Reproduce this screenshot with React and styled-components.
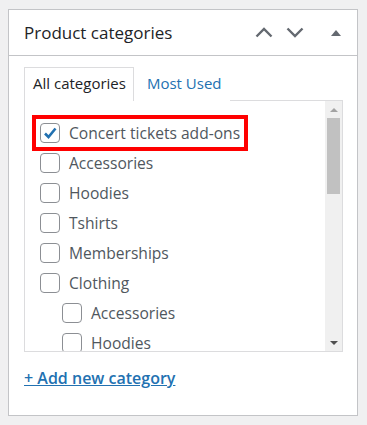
import React from 'react'
import styled, { createGlobalStyle } from 'styled-components'

const GlobalStyle = createGlobalStyle`
  body {
    margin: 0;
    background: #f0f0f1;
    font-family: 'Open Sans', 'Noto Sans', sans-serif;
  }
`

const categories = [
  { name: 'Concert tickets add-ons', checked: true, highlight: true },
  { name: 'Accessories' },
  { name: 'Hoodies' },
  { name: 'Tshirts' },
  { name: 'Memberships' },
  { name: 'Clothing' },
  { name: 'Accessories', child: true },
  { name: 'Hoodies', child: true },
]

const ChevronUp = () => (
  <svg width="18" height="11" viewBox="0 0 18 11">
    <path d="M1.5 9.5 L9 2 L16.5 9.5" fill="none" stroke="#646970" strokeWidth="2.4" />
  </svg>
)

const ChevronDown = () => (
  <svg width="18" height="11" viewBox="0 0 18 11">
    <path d="M1.5 1.5 L9 9 L16.5 1.5" fill="none" stroke="#646970" strokeWidth="2.4" />
  </svg>
)

const Caret = () => (
  <svg width="10" height="8" viewBox="0 0 10 8">
    <path d="M0 7 L5 1 L10 7 Z" fill="#646970" />
  </svg>
)

const Check = () => (
  <svg width="16" height="16" viewBox="0 0 16 16">
    <path d="M3 8.5 L6.5 12 L13.5 3.5" fill="none" stroke="#2271b1" strokeWidth="2.6" />
  </svg>
)

const App = () => {
  return (
    <>
      <GlobalStyle />
      <Panel>
        <Header>
          <h2>Product categories</h2>
          <div className='actions'>
            <IconButton aria-label="Move up"><ChevronUp /></IconButton>
            <IconButton aria-label="Move down"><ChevronDown /></IconButton>
            <IconButton aria-label="Toggle panel" $small><Caret /></IconButton>
          </div>
        </Header>

        <Body>
          <Tabs>
            <Tab $active>All categories</Tab>
            <Tab>Most Used</Tab>
          </Tabs>

          <ListBox>
            <List>
              {categories.map((c, i) => (
                <Item key={i} $child={c.child}>
                  <Row $highlight={c.highlight}>
                    <Box>{c.checked && <Check />}</Box>
                    <span>{c.name}</span>
                  </Row>
                </Item>
              ))}
            </List>
            <Scrollbar>
              <span className='up' />
              <Thumb />
              <span className='down' />
            </Scrollbar>
          </ListBox>

          <AddLink href="#">+ Add new category</AddLink>
        </Body>
      </Panel>
    </>
  )
}

const Panel = styled.section`
  box-sizing: border-box;
  width: 350px;
  height: 407px;
  margin: 9px 0 0 8px;
  background: #fff;
  border: 1px solid #c3c4c7;
`

const Header = styled.div`
  display: flex;
  align-items: center;
  justify-content: space-between;
  height: 45px;
  border-bottom: 1px solid #c3c4c7;
  padding: 0 16px 0 15px;

  h2 {
    margin: 0;
    font-size: 17px;
    font-weight: 500;
    color: #1d2327;
  }

  .actions {
    display: flex;
    align-items: center;
    gap: 13px;
  }
`

const IconButton = styled.button`
  display: flex;
  align-items: center;
  justify-content: center;
  border: none;
  background: none;
  padding: 0;
  margin-left: ${p => p.$small ? '14px' : '0'};
  cursor: pointer;
`

const Body = styled.div`
  padding: 10px 15px 0 15px;
`

const Tabs = styled.div`
  display: flex;
  align-items: flex-end;
  height: 34px;
`

const Tab = styled.div`
  box-sizing: border-box;
  height: 34px;
  padding: 0 7px 3px 8px;
  display: flex;
  align-items: center;
  font-size: 15px;
  color: ${p => p.$active ? '#1d2327' : '#2271b1'};
  background: #fff;
  border: 1px solid ${p => p.$active ? '#dcdcde' : 'transparent'};
  border-bottom: none;
  margin-bottom: -1px;
  position: relative;
  z-index: 1;
  ${p => !p.$active && 'padding-left: 12px;'}
`

const ListBox = styled.div`
  box-sizing: border-box;
  display: flex;
  width: 319px;
  height: 252px;
  border: 1px solid #dcdcde;
`

const List = styled.ul`
  flex: 1;
  margin: 0;
  padding: 22px 0 0 15px;
  list-style: none;
  overflow: hidden;
`

const Item = styled.li`
  height: 30px;
  padding-left: ${p => p.$child ? '22px' : '0'};
`

const Row = styled.label`
  display: inline-flex;
  align-items: center;
  gap: 9px;
  height: 20px;
  font-size: 15.6px;
  color: #50575e;
  outline: ${p => p.$highlight ? '4px solid #ff0000' : 'none'};
  outline-offset: 4px;
`

const Box = styled.span`
  box-sizing: border-box;
  display: flex;
  align-items: center;
  justify-content: center;
  width: 20px;
  height: 20px;
  border: 1px solid #8c8f94;
  border-radius: 4px;
  background: #fff;
`

const Scrollbar = styled.div`
  width: 17px;
  background: #f0f0f0;
  display: flex;
  flex-direction: column;
  align-items: center;

  .up, .down {
    width: 0;
    height: 0;
    border-left: 4px solid transparent;
    border-right: 4px solid transparent;
  }

  .up {
    margin-top: 7px;
    border-bottom: 4px solid #a3a3a3;
  }

  .down {
    margin-top: auto;
    margin-bottom: 6px;
    border-top: 4px solid #505050;
  }
`

const Thumb = styled.div`
  width: 13px;
  height: 76px;
  margin-top: 6px;
  background: #c1c1c1;
`

const AddLink = styled.a`
  display: inline-block;
  margin-top: 15px;
  font-size: 16px;
  font-weight: 600;
  color: #2271b1;
  text-decoration: underline;
`

export default App
